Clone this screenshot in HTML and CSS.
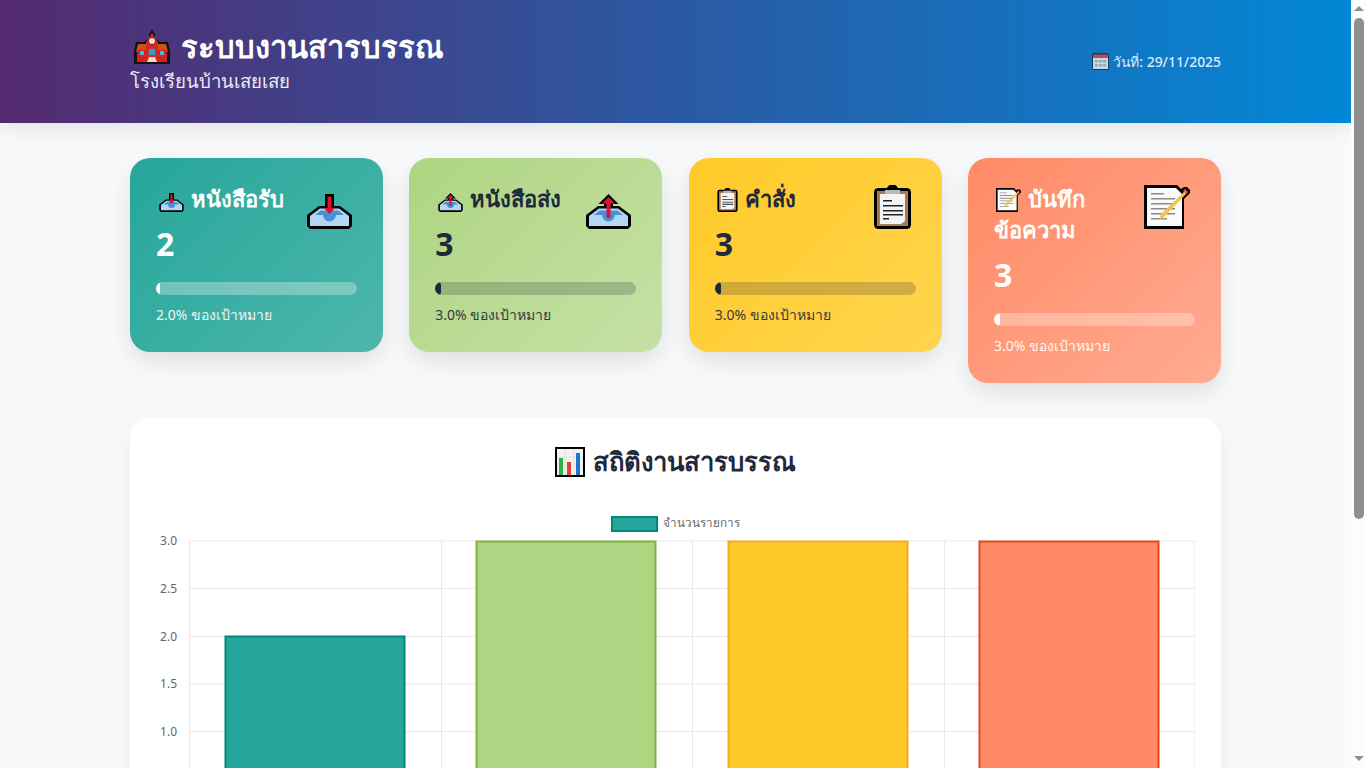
FILE: index.html
```html
<!DOCTYPE html>
<html lang="th">
<head>
    <meta charset="UTF-8">
    <meta name="viewport" content="width=device-width, initial-scale=1.0">
    <title>ระบบงานสารบรรณ</title>
    <link rel="stylesheet" href="styles.css">
</head>
<body>
    <svg class="icon-defs" width="0" height="0">
        <symbol id="i-school" viewBox="0 0 36 35">
            <path d="M18 0l3 6v3l5 4h8l2 9v13H0V22l2-9h8l5-4V6z" fill="#111"/>
            <path d="M4 15h8l6-5 6 5h8l2 8H2z" fill="#c9541f"/>
            <path d="M3 21h30v12H3z" fill="#d81e22"/>
            <path d="M12 13l6-9 6 9v20H12z" fill="#cf2a20"/>
            <circle cx="18" cy="12" r="3.6" fill="#f7d9d0" stroke="#8c1a14"/>
            <path d="M6 22h4v4H6zM26 22h4v4h-4z" fill="#3bc0e8"/>
            <path d="M15 20h6v6h-6z" fill="#2a9fd0"/>
            <path d="M13 33l2-5h6l2 5z" fill="#f3d9cf"/>
        </symbol>
        <symbol id="i-inbox" viewBox="0 0 45 35">
            <path d="M18 0h9v12h6l12 9v11l-3 3H3l-3-3V21l12-9h6z" fill="#000"/>
            <path d="M3 22l10-7.5h19L42 22v10H3z" fill="#b5d6f2"/>
            <path d="M8 21l5.500-4.500h18L37 21h-8a6.500 6.500 0 0 1-13 0z" fill="#4a90d9"/>
            <path d="M20.500 2.500h4V14H28l-5.500 6-5.500-6h3.500z" fill="#e0112f"/>
        </symbol>
        <symbol id="i-outbox" viewBox="0 0 45 35">
            <path d="M22.500 0l10 10H27v2h6l12 9v11l-3 3H3l-3-3V21l12-9h6v-2h-5.500z" fill="#000"/>
            <path d="M3 22l10-7.500h19L42 22v10H3z" fill="#b5d6f2"/>
            <path d="M8 21l5.500-4.500h18L37 21h-8a6.500 6.500 0 0 1-13 0z" fill="#4a90d9"/>
            <path d="M22.500 3l6.500 6.500h-4.500V24h-4V9.500H16z" fill="#e0112f"/>
        </symbol>
        <symbol id="i-clip" viewBox="0 0 37 44">
            <path d="M13 3a6 6 0 0 1 11 0h9l3 1 1 3v33l-1 3-3 1H4l-3-1-1-3V7l1-3 3-1z" fill="#000"/>
            <path d="M3 6h31v35H3z" fill="#a77b58"/>
            <path d="M6 9h25v27l-4 3H6z" fill="#f4f4f4"/>
            <path d="M11 5h15v4H11z" fill="#b9b9b9"/>
            <path d="M9 15h9v1.500H9zM9 20h20v1.500H9zM9 25h20v1.500H9zM9 29h20v1.500H9zM9 33h6v1.500H9z" fill="#222"/>
        </symbol>
        <symbol id="i-memo" viewBox="0 0 46 44">
            <path d="M0 0h33l4 4 3-2h3l3 3v3l-4 4-2 2v30H0z" fill="#000"/>
            <path d="M3 3h29l6 6v32H3z" fill="#fafafa"/>
            <path d="M7 8h13v1.500H7zM7 13h24v1.500H7zM7 18h24v1.500H7zM7 23h24v1.500H7zM7 28h24v1.500H7zM7 33h16v1.500H7z" fill="#8a8a8a"/>
            <path d="M41 6l2 2-23 24-5 3 2-6z" fill="#f4c542"/>
            <path d="M39 6l2-2 3 3-2 2z" fill="#e65a5a"/>
        </symbol>
        <symbol id="i-chart" viewBox="0 0 30 30">
            <path d="M0 0h30v30H0z" fill="#000"/>
            <path d="M2 2h26v26H2z" fill="#f2f2f2"/>
            <path d="M2 10h26M2 18h26M10 2v26M19 2v26" stroke="#ddd" stroke-width=".8"/>
            <path d="M4 11h4v17H4z" fill="#2fb344"/>
            <path d="M12 15h4v13h-4z" fill="#e2432b"/>
            <path d="M21 6h4v22h-4z" fill="#1f77d0"/>
        </symbol>
        <symbol id="i-cal" viewBox="0 0 17 17">
            <path d="M1 0h15l1 1v15l-1 1H1l-1-1V1z" fill="#1c3350"/>
            <path d="M1 1.500h15V5H1z" fill="#d9443c"/>
            <path d="M1 5h15v11H1z" fill="#e4e8ec"/>
            <path d="M3 7h3v2.500H3zM7 7h3v2.500H7zM11 7h3v2.500h-3zM3 11h3v2.500H3zM7 11h3v2.500H7zM11 11h3v2.500h-3z" fill="#a9b2bc"/>
        </symbol>
    </svg>

    <header class="top-header">
        <div class="header-left">
            <h1><svg class="ico-school"><use href="#i-school"/></svg>ระบบงานสารบรรณ</h1>
            <p>โรงเรียนบ้านเสยเสย</p>
        </div>
        <div class="header-date"><svg class="ico-cal"><use href="#i-cal"/></svg>วันที่: 29/11/2025</div>
    </header>

    <main class="container">
        <section class="cards">
            <div class="card card-teal">
                <div class="card-icon"><svg class="big-tray"><use href="#i-inbox"/></svg></div>
                <h3><svg class="ico-tray"><use href="#i-inbox"/></svg>หนังสือรับ</h3>
                <div class="card-value">2</div>
                <div class="progress"><div class="progress-fill" style="width: 2%"></div></div>
                <p class="card-note">2.0% ของเป้าหมาย</p>
            </div>
            <div class="card card-green">
                <div class="card-icon"><svg class="big-tray"><use href="#i-outbox"/></svg></div>
                <h3><svg class="ico-tray"><use href="#i-outbox"/></svg>หนังสือส่ง</h3>
                <div class="card-value">3</div>
                <div class="progress"><div class="progress-fill" style="width: 3%"></div></div>
                <p class="card-note">3.0% ของเป้าหมาย</p>
            </div>
            <div class="card card-yellow">
                <div class="card-icon"><svg class="big-clip"><use href="#i-clip"/></svg></div>
                <h3><svg class="ico-clip"><use href="#i-clip"/></svg>คำสั่ง</h3>
                <div class="card-value">3</div>
                <div class="progress"><div class="progress-fill" style="width: 3%"></div></div>
                <p class="card-note">3.0% ของเป้าหมาย</p>
            </div>
            <div class="card card-coral">
                <div class="card-icon"><svg class="big-memo"><use href="#i-memo"/></svg></div>
                <h3><svg class="ico-memo"><use href="#i-memo"/></svg>บันทึก<br>ข้อความ</h3>
                <div class="card-value">3</div>
                <div class="progress"><div class="progress-fill" style="width: 3%"></div></div>
                <p class="card-note">3.0% ของเป้าหมาย</p>
            </div>
        </section>

        <section class="chart-card">
            <h2><svg class="ico-chart"><use href="#i-chart"/></svg>สถิติงานสารบรรณ</h2>
            <svg class="chart" viewBox="0 0 1039 350" width="1039" height="350">
                <!-- legend -->
                <rect x="456" y="7" width="45" height="14" fill="#26a69a" stroke="#00897b" stroke-width="2"/>
                <text class="legend-text" x="507" y="17">จำนวนรายการ</text>
                <!-- grid -->
                <g class="grid">
                    <path d="M33 31H1039M33 78.500H1039M33 126.500H1039M33 174H1039M33 221.500H1039M33 269H1039M33 316.500H1039"/>
                    <path d="M33.500 31V322M285.500 31V322M536.500 31V322M788.500 31V322M1039 31V322"/>
                </g>
                <!-- bars -->
                <rect x="69.500" y="126.500" width="179" height="190" fill="#26a69a" stroke="#00897b" stroke-width="2"/>
                <rect x="320.500" y="31.500" width="179" height="285" fill="#aed581" stroke="#7cb342" stroke-width="2"/>
                <rect x="572.500" y="31.500" width="179" height="285" fill="#ffca28" stroke="#f9a825" stroke-width="2"/>
                <rect x="823.500" y="31.500" width="179" height="285" fill="#ff8a65" stroke="#e64a19" stroke-width="2"/>
                <!-- axis labels -->
                <g class="y-labels">
                    <text x="21" y="35">3.0</text>
                    <text x="21" y="82.500">2.5</text>
                    <text x="21" y="130.500">2.0</text>
                    <text x="21" y="178">1.5</text>
                    <text x="21" y="225.500">1.0</text>
                    <text x="21" y="273">0.5</text>
                    <text x="21" y="320.500">0.0</text>
                </g>
                <g class="x-labels">
                    <text x="159" y="338">หนังสือรับ</text>
                    <text x="410" y="338">หนังสือส่ง</text>
                    <text x="662" y="338">คำสั่ง</text>
                    <text x="913" y="338">บันทึกข้อความ</text>
                </g>
            </svg>
        </section>
    </main>

    <!-- page scrollbar -->
    <div class="scrollbar">
        <span class="arrow-up"></span>
        <span class="scroll-thumb"></span>
        <span class="arrow-down"></span>
    </div>
</body>
</html>
```

FILE: styles.css
```css
body {
    font-family: "Noto Sans", "Open Sans", sans-serif;
    margin: 0;
    padding: 0 15px 0 0;
    background-color: #f8f9fb;
    color: #1e293b;
}

.icon-defs {
    position: absolute;
}

/* scrollbar */
.scrollbar {
    position: fixed;
    top: 0;
    right: 0;
    bottom: 0;
    display: flex;
    flex-direction: column;
    align-items: center;
    width: 15px;
    background-color: #fbfcfd;
}

.arrow-up,
.arrow-down {
    width: 0;
    height: 0;
    border-left: 5px solid transparent;
    border-right: 5px solid transparent;
}

.arrow-up {
    margin: 6px 0 7px;
    border-bottom: 5px solid #8f8f8f;
}

.arrow-down {
    margin: auto 0 7px;
    border-top: 5px solid #8f8f8f;
}

.scroll-thumb {
    width: 10px;
    height: 501px;
    border-radius: 5px;
    background-color: #8f8f8f;
}

/* header */
.top-header {
    display: flex;
    align-items: center;
    justify-content: space-between;
    height: 123px;
    padding: 0 130px;
    box-sizing: border-box;
    background: linear-gradient(90deg, #542a70, #0288d6);
    color: #fff;
    box-shadow: 0 4px 20px rgba(0, 0, 0, 0.1);
}

.header-left {
    padding-bottom: 5px;
}

.header-left h1 {
    display: flex;
    align-items: center;
    margin: 0;
    font-size: 30.8px;
    font-weight: 600;
    line-height: 44px;
}

.header-left p {
    margin: 0;
    font-size: 18.6px;
    line-height: 26px;
    opacity: 0.9;
}

.ico-school {
    width: 36px;
    height: 35px;
    margin: 0 11px 0 4px;
}

.header-date {
    display: flex;
    align-items: center;
    font-size: 13.9px;
    font-weight: 500;
    opacity: 0.85;
}

.ico-cal {
    width: 17px;
    height: 17px;
    margin-right: 4px;
}

/* cards */
.container {
    padding: 35px 130px 245px;
}

.cards {
    display: grid;
    grid-template-columns: repeat(4, 1fr);
    gap: 26.4px;
    align-items: start;
    margin-bottom: 35px;
}

.card {
    position: relative;
    padding: 25px 26px 27px;
    border-radius: 20px;
    box-shadow: 0 10px 25px rgba(0, 0, 0, 0.1);
}

.card-teal {
    background: linear-gradient(135deg, #26a69a, #4db6ac);
    color: #fff;
}

.card-green {
    background: linear-gradient(135deg, #aed581, #c5e1a5);
}

.card-yellow {
    background: linear-gradient(135deg, #ffca28, #ffd54f);
}

.card-coral {
    background: linear-gradient(135deg, #ff8a65, #ffab91);
    color: #fff;
}

.card-icon {
    position: absolute;
    top: 25px;
    right: 31px;
    display: flex;
    align-items: flex-end;
    justify-content: flex-end;
    width: 46px;
    height: 46px;
}

.big-tray {
    width: 45px;
    height: 35px;
}

.big-clip {
    width: 37px;
    height: 44px;
}

.big-memo {
    width: 46px;
    height: 44px;
}

.card h3 {
    margin: 0;
    font-size: 22px;
    font-weight: 600;
    line-height: 31px;
}

.card h3 svg {
    vertical-align: -5px;
    margin-right: 7px;
}

.ico-tray {
    width: 25px;
    height: 19px;
    margin-left: 3px;
}

.ico-clip {
    width: 21px;
    height: 24px;
    margin-left: 2px;
}

.ico-memo {
    width: 25px;
    height: 24px;
    margin-left: 2px;
}

.card-value {
    margin: 10px 0 18px;
    font-size: 32px;
    font-weight: 700;
    line-height: 40px;
}

.progress {
    height: 13px;
    margin-bottom: 10px;
    border-radius: 10px;
    background-color: rgba(30, 41, 59, 0.22);
    overflow: hidden;
}

.card-teal .progress,
.card-coral .progress {
    background-color: rgba(255, 255, 255, 0.3);
}

.progress-fill {
    height: 100%;
    border-radius: 10px;
    background-color: #1e293b;
}

.card-teal .progress-fill,
.card-coral .progress-fill {
    background-color: #fff;
}

.card-note {
    margin: 0;
    font-size: 14px;
    line-height: 20px;
    opacity: 0.9;
}

/* chart */
.chart-card {
    padding: 24px 26px 26px;
    border-radius: 20px;
    background-color: #fff;
    box-shadow: 0 10px 25px rgba(0, 0, 0, 0.06);
}

.chart-card h2 {
    display: flex;
    align-items: center;
    justify-content: center;
    margin: 0 0 29px;
    font-size: 25.6px;
    font-weight: 600;
    line-height: 39px;
}

.ico-chart {
    width: 30px;
    height: 30px;
    margin-right: 8px;
}

.chart {
    display: block;
}

.grid path {
    fill: none;
    stroke: #e8e8e8;
    stroke-width: 1;
}

.legend-text,
.x-labels text {
    font-size: 11.7px;
    fill: #666;
}

.y-labels text {
    font-size: 12px;
    fill: #666;
    text-anchor: end;
}

.x-labels text {
    text-anchor: middle;
}
```
